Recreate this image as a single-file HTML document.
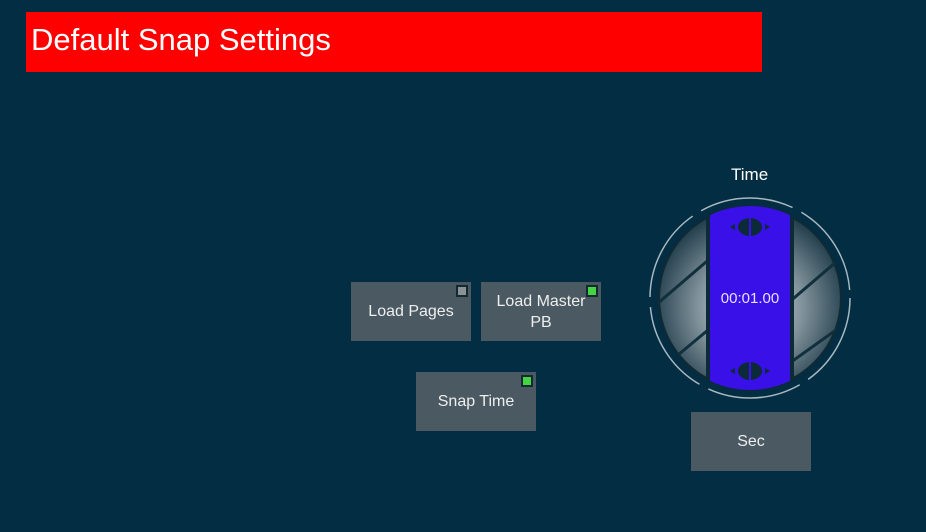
<!DOCTYPE html>
<html><head><style>
body{margin:0;width:926px;height:532px;background:#032d42;font-family:"Liberation Sans",sans-serif;overflow:hidden;position:relative}
.hdr{position:absolute;left:26px;top:12px;width:736px;height:60px;background:#ff0000;color:#fff;font-size:31px;line-height:56px;padding-left:5px;box-sizing:border-box}
.b{position:absolute;width:120px;height:59px;background:#4b5a62;color:#eee;font-size:16px;display:flex;align-items:center;justify-content:center;text-align:center;line-height:21px}
.ind{position:absolute;right:3px;top:3px;width:8px;height:8px;border:2px solid #142a30}
</style></head><body>
<div class="hdr">Default Snap Settings</div>
<div class="b" style="left:351px;top:282px">Load Pages<div class="ind" style="background:#8a9296"></div></div>
<div class="b" style="left:481px;top:282px">Load Master<br>PB<div class="ind" style="background:#44d444"></div></div>
<div class="b" style="left:416px;top:372px">Snap Time<div class="ind" style="background:#44d444"></div></div>
<div class="b" style="left:691px;top:412px">Sec</div>
<div style="position:absolute;left:731px;top:165px;color:#fff;font-size:17px">Time</div>
<svg style="position:absolute;left:640px;top:190px" width="220" height="220" viewBox="640 190 220 220">
<defs><radialGradient id="g" cx="0.5" cy="0.55" r="0.55"><stop offset="0" stop-color="#dfe6ea"/><stop offset="0.55" stop-color="#7d8f98"/><stop offset="1" stop-color="#203c4a"/></radialGradient>
<clipPath id="c"><circle cx="750" cy="298" r="92"/></clipPath></defs>
<circle cx="750" cy="298" r="100" fill="none" stroke="#a8b8c0" stroke-width="1.5" stroke-dasharray="95 10"/>
<circle cx="750" cy="298" r="93" fill="#0c2a38"/>
<g clip-path="url(#c)">
<circle cx="750" cy="298" r="90" fill="url(#g)"/>
<g stroke="#12303c" stroke-width="3">
<line x1="650" y1="310" x2="720" y2="250"/><line x1="660" y1="370" x2="720" y2="320"/>
<line x1="780" y1="310" x2="850" y2="250"/><line x1="780" y1="370" x2="850" y2="320"/>
</g>
<rect x="706" y="200" width="88" height="200" fill="#0c2a38"/>
<rect x="710" y="200" width="80" height="200" fill="#3a10e8"/>
</g>
<g fill="#0c2a38">
<ellipse cx="750" cy="227" rx="12" ry="9"/><polygon points="730,227 735,224 735,230"/><polygon points="770,227 765,224 765,230"/>
<ellipse cx="750" cy="371" rx="12" ry="9"/><polygon points="730,371 735,368 735,374"/><polygon points="770,371 765,368 765,374"/>
</g>
<g stroke="#3a10e8" stroke-width="2"><line x1="750" y1="217" x2="750" y2="237"/><line x1="750" y1="361" x2="750" y2="381"/></g>
<text x="750" y="303" fill="#e8e0ff" font-size="15" text-anchor="middle" font-family="Liberation Sans">00:01.00</text>
</svg>
</body></html>
